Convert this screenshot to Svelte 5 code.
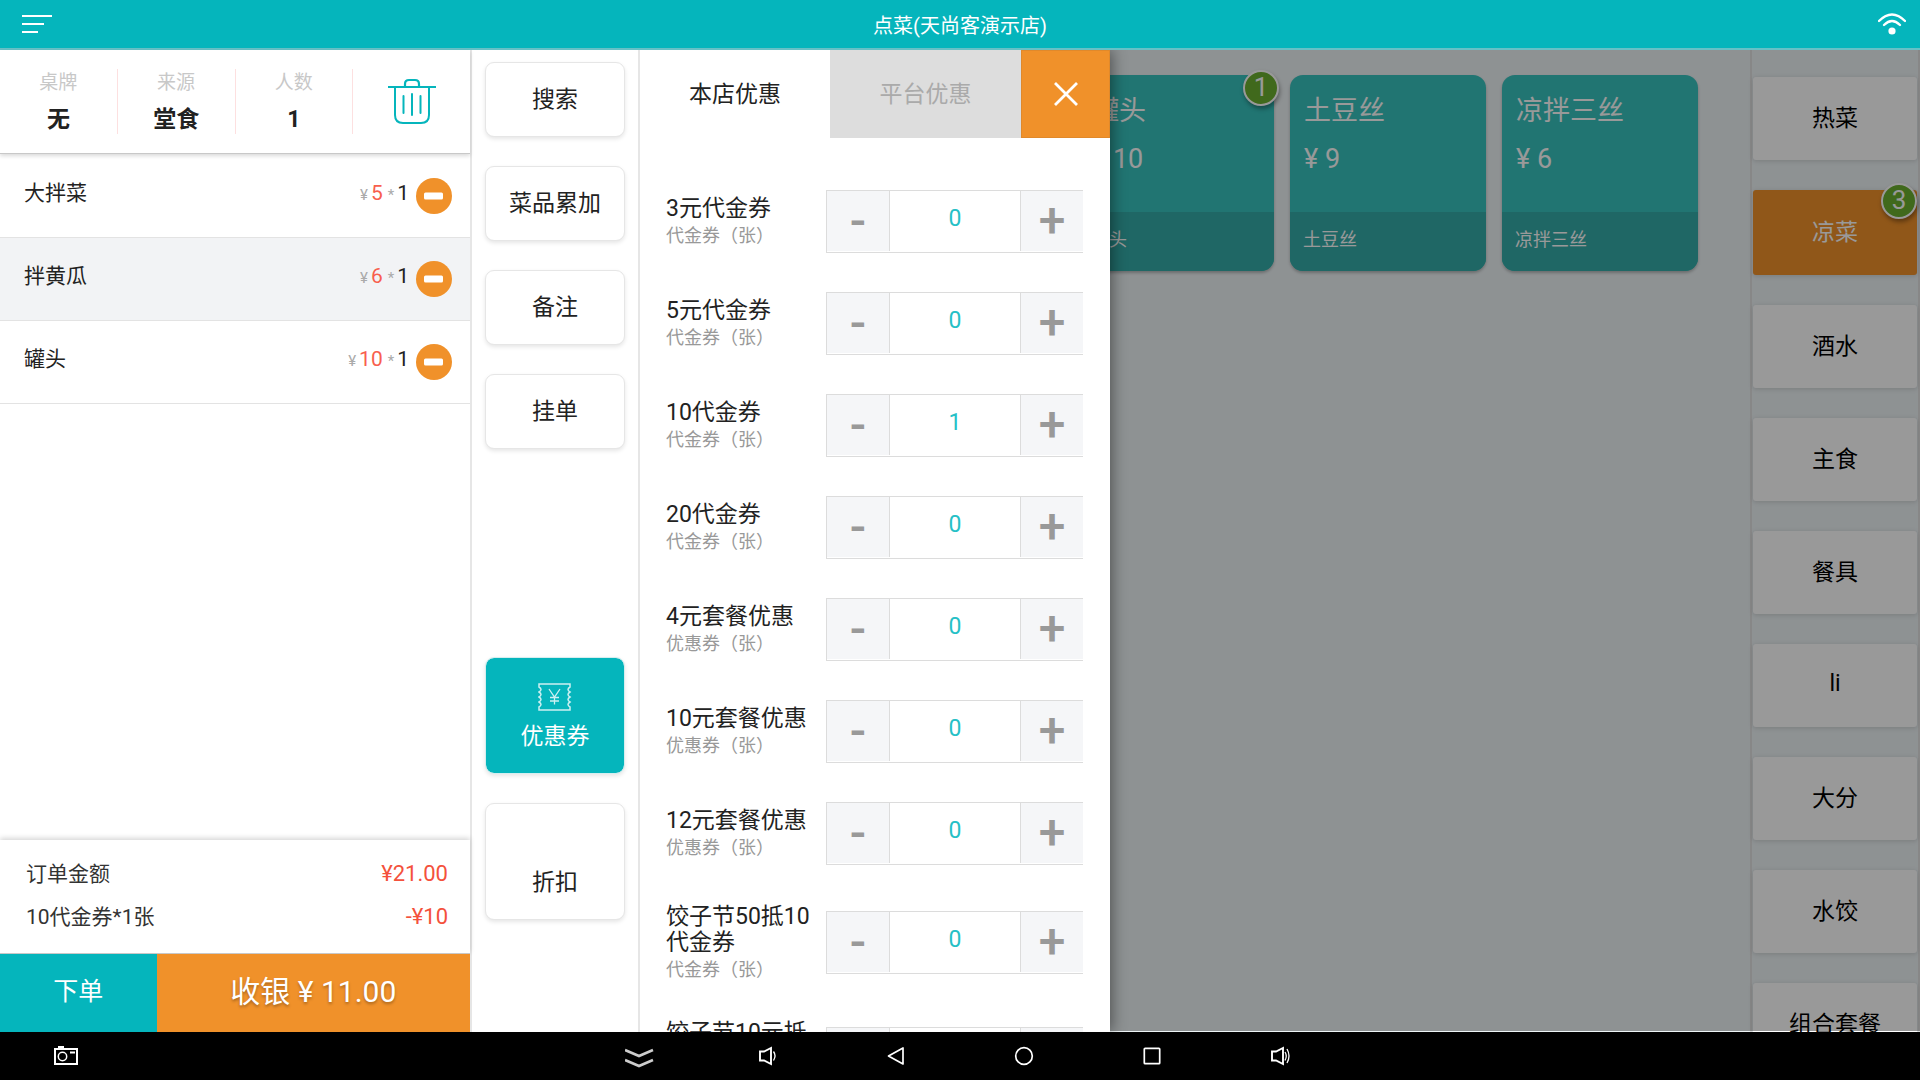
<script lang="ts">
  interface OrderItem {
    name: string;
    price: number;
    count: number;
  }

  interface Coupon {
    name: string;
    unit: string;
    count: number;
  }

  interface Dish {
    name: string;
    price: number;
    count?: number;
  }

  interface Category {
    name: string;
    count?: number;
  }

  const info = [
    { label: '桌牌', value: '无' },
    { label: '来源', value: '堂食' },
    { label: '人数', value: '1' },
  ];

  let order = $state<OrderItem[]>([
    { name: '大拌菜', price: 5, count: 1 },
    { name: '拌黄瓜', price: 6, count: 1 },
    { name: '罐头', price: 10, count: 1 },
  ]);

  const actions = ['搜索', '菜品累加', '备注', '挂单'];

  let coupons = $state<Coupon[]>([
    { name: '3元代金券', unit: '代金券（张）', count: 0 },
    { name: '5元代金券', unit: '代金券（张）', count: 0 },
    { name: '10代金券', unit: '代金券（张）', count: 1 },
    { name: '20代金券', unit: '代金券（张）', count: 0 },
    { name: '4元套餐优惠', unit: '优惠券（张）', count: 0 },
    { name: '10元套餐优惠', unit: '优惠券（张）', count: 0 },
    { name: '12元套餐优惠', unit: '优惠券（张）', count: 0 },
    { name: '饺子节50抵10代金券', unit: '代金券（张）', count: 0 },
    { name: '饺子节10元抵扣券', unit: '代金券（张）', count: 0 },
  ]);

  const dishes: Dish[] = [
    { name: '罐头', price: 10, count: 1 },
    { name: '土豆丝', price: 9 },
    { name: '凉拌三丝', price: 6 },
  ];

  const categories: Category[] = [
    { name: '热菜' },
    { name: '凉菜', count: 3 },
    { name: '酒水' },
    { name: '主食' },
    { name: '餐具' },
    { name: 'li' },
    { name: '大分' },
    { name: '水饺' },
    { name: '组合套餐' },
  ];

  let activeCategory = $state('凉菜');
  let activeTab = $state('本店优惠');
  let drawerOpen = $state(true);

  const total = $derived(order.reduce((sum, item) => sum + item.price * item.count, 0));
  const used = $derived(coupons[2].count);
  const payable = $derived(total - used * 10);

  function removeOne(item: OrderItem): void {
    item.count -= 1;
    order = order.filter((entry) => entry.count > 0);
  }

  function step(coupon: Coupon, delta: number): void {
    coupon.count = Math.max(0, coupon.count + delta);
  }
</script>

<div class="app">
  <header class="topbar">
    <button type="button" class="icon-button" aria-label="菜单">
      <svg width="30" height="20" viewBox="0 0 30 20">
        <path d="M0 2h30M0 10h22M0 18h16" stroke="#fff" stroke-width="2" />
      </svg>
    </button>
    <h1>点菜(天尚客演示店)</h1>
    <svg class="wifi" width="28" height="22" viewBox="0 0 28 22" fill="none" stroke="#fff">
      <path d="M1 8Q14-5 27 8" stroke-width="2.4" stroke-linecap="round" />
      <path d="M6 12Q14 4 22 12" stroke-width="2.4" stroke-linecap="round" />
      <circle cx="14" cy="18" r="3.6" fill="#fff" stroke="none" />
    </svg>
  </header>

  <div class="workspace">
    <section class="cart">
      <div class="summary">
        {#each info as entry (entry.label)}
          <div class="summary-cell">
            <span class="summary-label">{entry.label}</span>
            <strong class="summary-value">{entry.value}</strong>
          </div>
        {/each}
        <button type="button" class="summary-cell clear" aria-label="清空">
          <svg width="50" height="48" viewBox="0 0 50 48" fill="none" stroke="#05b5bc" stroke-width="2">
            <path d="M1 9h48M18 9V6q0-4 4-4h6q4 0 4 4v3" stroke-width="2.2" />
            <path d="M8 9v28q0 8 8 8h18q8 0 8-8V9" />
            <path d="M16.500 18v17M25 16v21M33.500 18v17" stroke-linecap="round" />
          </svg>
        </button>
      </div>

      <ul class="order">
        {#each order as item, idx (item.name)}
          <li class:striped={idx % 2 === 1}>
            <div class="order-line">
              <span class="order-name">{item.name}</span>
              <span class="order-sign">¥</span>
              <span class="order-price">{item.price}</span>
              <span class="order-times">*</span>
              <span>{item.count}</span>
            </div>
            <button type="button" aria-label="减少{item.name}" onclick={() => removeOne(item)}>
              <svg width="36" height="36" viewBox="0 0 36 36">
                <circle cx="18" cy="18" r="18" fill="#f0912a" />
                <rect x="8" y="14.500" width="19" height="7" rx="1.500" fill="#fff" />
              </svg>
            </button>
          </li>
        {/each}
      </ul>

      <dl class="totals">
        <div>
          <dt>订单金额</dt>
          <dd>¥{total.toFixed(2)}</dd>
        </div>
        {#if used > 0}
          <div>
            <dt>10代金券*{used}张</dt>
            <dd>-¥{used * 10}</dd>
          </div>
        {/if}
      </dl>

      <div class="checkout">
        <button type="button" class="place">下单</button>
        <button type="button" class="pay">收银 ¥ {payable.toFixed(2)}</button>
      </div>
    </section>

    <nav class="actions">
      {#each actions as action (action)}
        <button type="button" class="action">{action}</button>
      {/each}
      <button type="button" class="action tall selected">
        <svg width="34" height="28" viewBox="0 0 34 28" fill="none" stroke="#fff" stroke-opacity="0.8">
          <path
            d="M1 1h31v3q-4 2.500 0 5-4 2.500 0 5-4 2.500 0 5-4 2.500 0 5v3H1v-3q4-2.500 0-5 4-2.500 0-5 4-2.500 0-5 4-2.500 0-5z"
            stroke-width="1.500"
          />
          <path d="M11 6l5.500 8L22 6M16.500 14v7.500M12 14.500h9M12 18h9" stroke-width="1.300" />
        </svg>
        优惠券
      </button>
      <button type="button" class="action tall">
        <span class="icon-space"></span>
        折扣
      </button>
    </nav>

    <main class="menu">
      <div class="dishes" class:beside-drawer={drawerOpen}>
        {#each dishes as dish (dish.name)}
          <button type="button" class="dish">
            <span class="dish-top">
              <span>{dish.name}</span>
              <span>¥ {dish.price}</span>
            </span>
            <span class="dish-bottom">{dish.name}</span>
            {#if dish.count}
              <span class="badge">{dish.count}</span>
            {/if}
          </button>
        {/each}
      </div>

      <aside class="categories">
        {#each categories as category (category.name)}
          <button
            type="button"
            class="category"
            class:current={activeCategory === category.name}
            onclick={() => (activeCategory = category.name)}
          >
            {category.name}
            {#if category.count}
              <span class="badge">{category.count}</span>
            {/if}
          </button>
        {/each}
      </aside>

      {#if drawerOpen}
        <div class="shade"></div>
        <section class="drawer">
          <div class="tabs">
            {#each ['本店优惠', '平台优惠'] as tab (tab)}
              <button type="button" class="tab" class:idle={activeTab !== tab} onclick={() => (activeTab = tab)}>
                {tab}
              </button>
            {/each}
            <button type="button" class="close" aria-label="关闭" onclick={() => (drawerOpen = false)}>
              <svg width="24" height="24" viewBox="0 0 24 24">
                <path d="M1 1l22 22M23 1L1 23" stroke="#fff" stroke-width="2.800" />
              </svg>
            </button>
          </div>

          <ul class="coupons">
            {#each coupons as coupon, idx (coupon.name)}
              <li>
                <label class="coupon-info" for="coupon-{idx}">
                  <span class="coupon-name">{coupon.name}</span>
                  <span class="coupon-unit">{coupon.unit}</span>
                </label>
                <div class="stepper">
                  <button type="button" onclick={() => step(coupon, -1)}>-</button>
                  <input id="coupon-{idx}" type="text" inputmode="numeric" bind:value={coupon.count} />
                  <button type="button" onclick={() => step(coupon, 1)}>+</button>
                </div>
              </li>
            {/each}
          </ul>
        </section>
      {/if}
    </main>
  </div>

  <footer class="system">
    <button type="button" class="camera" aria-label="截屏">
      <svg width="24" height="20" viewBox="0 0 24 20" fill="none" stroke="#fff">
        <path d="M1 3h22v15H1z" stroke-width="2" />
        <path d="M4 1.500h6" stroke-width="3" />
        <circle cx="8.500" cy="10.500" r="4.200" stroke-width="1.500" />
        <path d="M16 6.500h5" stroke-width="2" />
      </svg>
    </button>
    <div class="keys">
      <button type="button" aria-label="收起">
        <svg width="30" height="28" viewBox="0 0 30 28" fill="none" stroke="#ccc" stroke-width="2.600">
          <path d="M0 8l14 6 14-6M0 18l14 6 14-6" />
        </svg>
      </button>
      <button type="button" aria-label="音量减">
        <svg width="20" height="20" viewBox="0 0 20 20" fill="none" stroke="#fff">
          <path d="M2 5.500h4L13 2v16l-7-3.500H2z" stroke-width="1.900" />
          <path d="M15.500 5.500q3 4 0 9" stroke-width="1.300" />
        </svg>
      </button>
      <button type="button" aria-label="返回">
        <svg width="20" height="20" viewBox="0 0 20 20" fill="none" stroke="#fff" stroke-width="1.700" stroke-linejoin="round">
          <path d="M17 2v16L2.500 10z" />
        </svg>
      </button>
      <button type="button" aria-label="主页">
        <svg width="20" height="20" viewBox="0 0 20 20" fill="none" stroke="#fff" stroke-width="1.700">
          <circle cx="10" cy="10" r="8.300" />
        </svg>
      </button>
      <button type="button" aria-label="最近任务">
        <svg width="20" height="20" viewBox="0 0 20 20" fill="none" stroke="#fff" stroke-width="1.700">
          <rect x="2.300" y="2.300" width="15.400" height="15.400" rx="0.800" />
        </svg>
      </button>
      <button type="button" aria-label="音量加">
        <svg width="20" height="20" viewBox="0 0 20 20" fill="none" stroke="#fff">
          <path d="M2 5.500h4L13 2v16l-7-3.500H2z" stroke-width="1.900" />
          <path d="M15 6q2.500 4 0 8.500M17 3q4 7 0 14" stroke-width="1.300" />
        </svg>
      </button>
    </div>
  </footer>
</div>

<style>
  :global(body) {
    margin: 0;
  }

  .app {
    display: flex;
    flex-direction: column;
    height: 100vh;
    overflow: hidden;
    background: #fff;
    color: #222;
    font-family: Roboto, 'Noto Sans CJK SC', sans-serif;
    font-size: 21px;
  }

  button {
    box-sizing: border-box;
    margin: 0;
    padding: 0;
    border: none;
    background: none;
    color: inherit;
    font: inherit;
    cursor: pointer;
  }

  svg {
    display: block;
  }

  ul,
  dl,
  dd {
    margin: 0;
    padding: 0;
    list-style: none;
  }

  /* Top bar */
  .topbar {
    box-sizing: border-box;
    display: grid;
    grid-template-columns: 1fr auto 1fr;
    align-items: center;
    flex: none;
    height: 50px;
    border-bottom: 2px solid #66c1c6;
    background: #05b5bc;
    color: #fff;
  }

  .icon-button {
    justify-self: start;
    margin-left: 22px;
  }

  .topbar h1 {
    margin: 0;
    font-size: 20px;
    font-weight: 400;
  }

  .wifi {
    justify-self: end;
    margin-right: 14px;
  }

  .workspace {
    display: flex;
    flex: 1;
    min-height: 0;
  }

  /* Cart */
  .cart {
    display: flex;
    flex-direction: column;
    flex: none;
    width: 470px;
    border-right: 2px solid #e6e6e6;
  }

  .summary {
    position: relative;
    display: flex;
    padding: 19px 0;
    border-bottom: 1px solid #c8c8c8;
    box-shadow: 0 2px 4px rgba(0, 0, 0, 0.15);
  }

  .summary-cell {
    box-sizing: border-box;
    display: flex;
    flex: 1;
    flex-direction: column;
    align-items: center;
    gap: 9px;
    height: 65px;
    padding-top: 1px;
    border-right: 1px solid #fde0e0;
  }

  .summary-cell.clear {
    justify-content: center;
    border-right: none;
  }

  .summary-label {
    color: #c8c8c8;
    font-size: 19px;
    line-height: 26px;
  }

  .summary-value {
    font-size: 23px;
    font-weight: 700;
    line-height: 30px;
  }

  .order {
    flex: 1;
    overflow: hidden;
    padding-top: 1px;
  }

  .order li {
    box-sizing: border-box;
    display: flex;
    align-items: center;
    gap: 7px;
    height: 83px;
    padding: 0 18px 0 24px;
    border-bottom: 1px solid #e3e3e3;
    line-height: 28px;
  }

  .order li.striped {
    background: #f2f3f5;
  }

  .order-line {
    display: flex;
    flex: 1;
    align-items: baseline;
    gap: 3px;
    padding-bottom: 4px;
  }

  .order-name {
    flex: 1;
  }

  .order-sign,
  .order-times {
    color: #aaa;
    font-size: 15px;
  }

  .order-price {
    margin-right: 2px;
    color: #f85f4e;
  }

  .totals {
    box-sizing: border-box;
    display: flex;
    flex-direction: column;
    gap: 15px;
    height: 114px;
    padding: 20px 22px 0 26px;
    border-bottom: 1px solid #c8c8c8;
    box-shadow: 0 -2px 5px rgba(0, 0, 0, 0.16);
    line-height: 28px;
  }

  .totals div {
    display: flex;
    justify-content: space-between;
  }

  .totals dt {
    color: #333;
  }

  .totals dd {
    color: #f4513c;
    font-size: 22px;
  }

  .checkout {
    display: grid;
    grid-template-columns: 1fr 2fr;
    height: 78px;
    color: #fff;
  }

  .checkout button {
    padding-bottom: 8px;
  }

  .place {
    background: #05b5bc;
    font-size: 25px;
  }

  .pay {
    background: #f0912a;
    font-size: 30px;
    text-shadow: 0 2px 3px rgba(0, 0, 0, 0.3);
  }

  /* Action column */
  .actions {
    box-sizing: border-box;
    display: flex;
    flex: none;
    flex-direction: column;
    gap: 29px;
    width: 168px;
    padding: 12px 13px 112px;
    border-right: 2px solid #e6e6e6;
  }

  .action {
    display: flex;
    flex-direction: column;
    align-items: center;
    justify-content: center;
    gap: 9px;
    height: 75px;
    border: 1px solid #e6e6e6;
    border-radius: 9px;
    background: #fff;
    box-shadow: 0 2px 4px rgba(0, 0, 0, 0.1);
    font-size: 23px;
    line-height: 34px;
  }

  .action.tall {
    height: 117px;
    padding-top: 6px;
  }

  .action.selected {
    margin-top: auto;
    border-color: #d5eeef;
    background: #05b5bc;
    background-clip: padding-box;
    color: #fff;
  }

  .icon-space {
    height: 28px;
  }

  /* Dish grid */
  .menu {
    position: relative;
    display: flex;
    flex: 1;
    min-width: 0;
    overflow: hidden;
    background: #edf3f5;
  }

  .dishes {
    display: grid;
    flex: 1;
    grid-template-columns: repeat(auto-fill, 196px);
    align-content: start;
    gap: 16px;
    padding: 25px 14px;
  }

  /* The open drawer covers the first two columns */
  .dishes.beside-drawer {
    padding-left: 438px;
  }

  .dish {
    position: relative;
    display: flex;
    flex-direction: column;
    height: 196px;
    border-radius: 13px;
    background: #37c3be;
    box-shadow: 0 2px 3px rgba(0, 0, 0, 0.25);
    color: #fff;
    text-align: left;
  }

  .dish-top {
    display: flex;
    flex: 1;
    flex-direction: column;
    gap: 12px;
    padding: 18px 14px 0;
    font-size: 27px;
    line-height: 36px;
  }

  .dish-bottom {
    padding: 0 14px 4px 13px;
    border-radius: 0 0 13px 13px;
    background: #34aca8;
    font-size: 18px;
    line-height: 55px;
  }

  .badge {
    position: absolute;
    top: -5px;
    right: -5px;
    box-sizing: border-box;
    width: 36px;
    height: 36px;
    border: 2px solid #fff;
    border-radius: 50%;
    background: #6baf2f;
    box-shadow: 1px 3px 4px rgba(0, 0, 0, 0.35);
    color: #fff;
    font-size: 26px;
    line-height: 30px;
    text-align: center;
  }

  /* Category column */
  .categories {
    box-sizing: border-box;
    display: flex;
    flex: none;
    flex-direction: column;
    gap: 30px;
    width: 170px;
    padding: 27px 1px 0;
    border-right: 2px solid #e2e2e2;
    border-left: 2px solid #e2e2e2;
  }

  .category {
    position: relative;
    flex: none;
    height: 83px;
    padding-bottom: 5px;
    border-radius: 3px;
    background: #fff;
    box-shadow: 0 1px 5px rgba(0, 0, 0, 0.15);
    color: #000;
    font-size: 23px;
  }

  .category.current {
    height: 85px;
    background: #f0912a;
    color: #fff;
  }

  .category .badge {
    top: -7px;
    right: 0;
  }

  .shade {
    position: absolute;
    inset: 0 0 1px;
    background: rgba(0, 0, 0, 0.4);
  }

  /* Coupon drawer */
  .drawer {
    position: absolute;
    top: 0;
    bottom: 0;
    left: 0;
    width: 470px;
    overflow: hidden;
    background: #fff;
    box-shadow: 2px 0 14px rgba(0, 0, 0, 0.45);
  }

  .tabs {
    display: grid;
    grid-template-columns: 190px 1fr 89px;
    height: 88px;
    font-size: 23px;
  }

  .tab {
    padding-bottom: 5px;
  }

  .tab.idle {
    background: #ddd;
    color: #aaa;
  }

  .close {
    display: flex;
    align-items: center;
    justify-content: center;
    border: 1px solid #e0892b;
    background: #f0912a;
  }

  .coupons {
    padding: 32px 27px 0 26px;
  }

  .coupons li {
    display: flex;
    align-items: center;
    min-height: 102px;
  }

  .coupon-info {
    display: flex;
    flex: 1;
    flex-direction: column;
    padding: 20px 0 16px;
  }

  .coupon-name {
    font-size: 23px;
    line-height: 26px;
  }

  .coupon-unit {
    color: #999;
    font-size: 18px;
    line-height: 28px;
  }

  .stepper {
    box-sizing: border-box;
    display: grid;
    flex: none;
    grid-template-columns: 62px 132px 62px;
    width: 257px;
    height: 63px;
    padding-bottom: 1px;
    border: 1px solid #dcdcdc;
    border-right: none;
  }

  .stepper button {
    background: #f5f6f8;
    color: #999;
    font-size: 48px;
    font-weight: 500;
    line-height: 60px;
  }

  .stepper input {
    box-sizing: border-box;
    width: 100%;
    min-width: 0;
    padding: 0 0 4px;
    border: solid #dcdcdc;
    border-width: 0 1px;
    border-radius: 0;
    background: #fff;
    color: #26c0c6;
    font: inherit;
    font-size: 23px;
    text-align: center;
    outline: none;
  }

  /* System bar */
  .system {
    display: grid;
    grid-template-columns: 1fr auto 1fr;
    align-items: center;
    flex: none;
    height: 48px;
    background: #000;
  }

  .camera {
    justify-self: start;
    margin-left: 54px;
  }

  .keys {
    display: grid;
    grid-template-columns: repeat(6, 128px);
    justify-items: center;
    align-items: center;
  }
</style>
